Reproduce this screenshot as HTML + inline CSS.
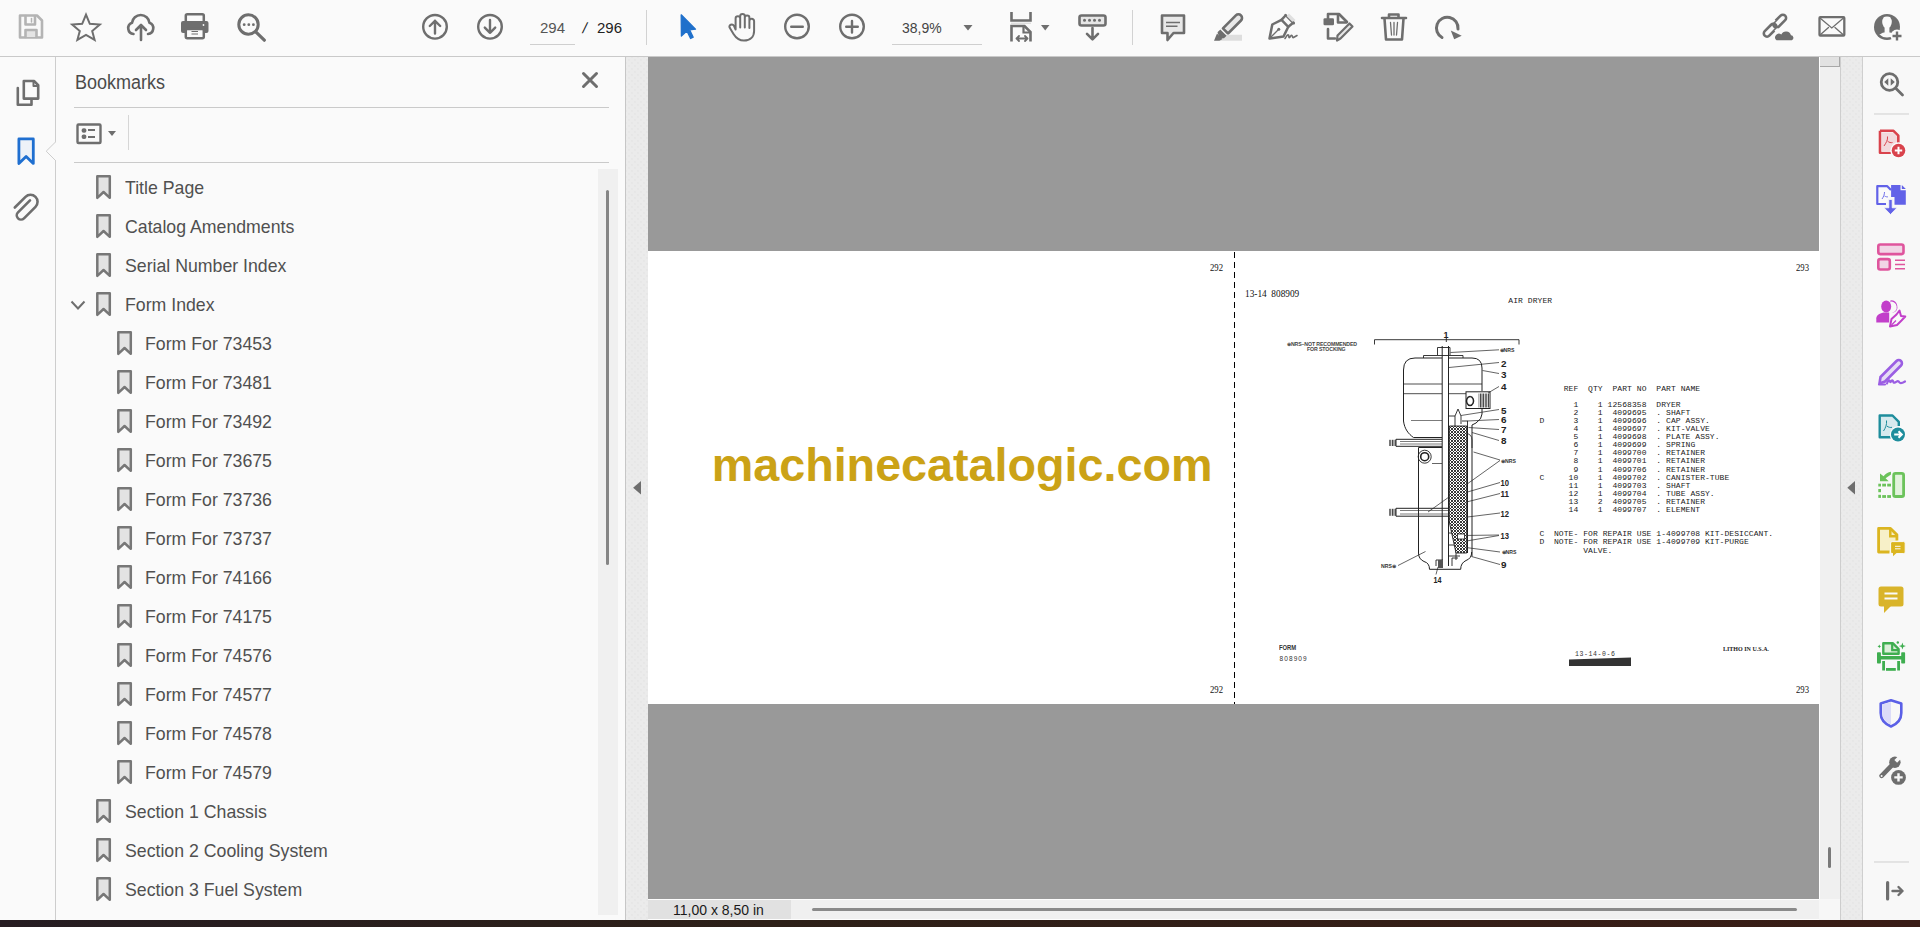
<!DOCTYPE html>
<html><head><meta charset="utf-8">
<style>
*{margin:0;padding:0;box-sizing:border-box}
html,body{width:1920px;height:927px;overflow:hidden;background:#fafafa;font-family:"Liberation Sans",sans-serif}
.a{position:absolute}
#tb{left:0;top:0;width:1920px;height:57px;background:#fafafa;border-bottom:1px solid #c9c9c9}
#licons{left:0;top:57px;width:56px;height:863px;background:#fafafa;border-right:1px solid #cdcdcd}
#panel{left:56px;top:57px;width:570px;height:863px;background:#fafafa;border-right:1px solid #c6c6c6}
.gut{background-color:#ebebeb;background-image:radial-gradient(circle,#dedede 0.5px,transparent 0.8px),radial-gradient(circle,#dedede 0.5px,transparent 0.8px);background-size:6px 6px;background-position:0 0,3px 3px}
#lgut{left:626px;top:57px;width:22px;height:863px}
#doc{left:648px;top:57px;width:1171px;height:842px;background:#999999}
#vs{left:1819px;top:57px;width:22px;height:842px;background:#f0f0f0;border-left:1px solid #fff;border-right:1px solid #cdcdcd}
#rgut{left:1841px;top:57px;width:22px;height:863px;border-right:1px solid #cfcfcf}
#rpane{left:1863px;top:57px;width:57px;height:863px;background:#f8f8f8}
#status{left:648px;top:899px;width:1171px;height:21px;background:#f0f0f0;border-top:1px solid #fdfdfd;border-bottom:1px solid #fdfdfd}
#dark{left:0;top:920px;width:1920px;height:7px;background:linear-gradient(90deg,#261d22,#2d2018 40%,#3a1d16)}
.bm{position:absolute;font-size:19px;color:#505050;white-space:nowrap;line-height:22px;transform:scaleX(0.932);transform-origin:0 0}
.ser{position:absolute;font-family:"Liberation Serif",serif;font-size:10px;line-height:11px;color:#111;white-space:nowrap;transform:scaleX(0.87);transform-origin:0 0}
.mono{position:absolute;font-family:"Liberation Mono",monospace;font-size:8px;line-height:9px;color:#1a1a1a;white-space:nowrap;letter-spacing:0.07px}
</style></head><body>
<div id="tb" class="a"></div>
<div id="licons" class="a"></div>
<div id="panel" class="a"></div>
<div id="lgut" class="a gut"></div>
<div id="doc" class="a"></div>
<div id="vs" class="a"></div>
<div id="rgut" class="a gut"></div>
<div id="rpane" class="a"></div>
<div id="status" class="a"></div>
<div id="dark" class="a"></div>
<!-- left icons -->
<svg class="a" style="left:0;top:57px" width="56" height="200" viewBox="0 57 56 200">
 <g fill="none" stroke="#6e6e6e" stroke-width="2.6" stroke-linejoin="round" stroke-linecap="round">
  <path d="M17.8,88V104.8H31.5V100"/>
  <path d="M23.8,81H34L38.2,85.2V98.6H23.8Z" fill="#fafafa"/>
  <path d="M33.5,81.5V86H38" stroke-width="2"/>
  <path d="M30,198.5L18,210.5A4.2,4.2 0 0 0 24,216.5L35.5,205A7,7 0 0 0 25.5,195L14.8,205.7" stroke-width="2.6" transform="translate(0,1.8)"/>
 </g>
 <path d="M18.9,138.9H33.3V163.4L26.1,156.4L18.9,163.4Z" fill="#eef2f8" stroke="#1f6fd0" stroke-width="2.8" stroke-linejoin="round"/>
 <path d="M56,141.5L46.2,151.2L56,161" fill="#fafafa" stroke="#cdcdcd" stroke-width="1"/>
</svg>
<!-- right pane icons -->
<svg class="a" style="left:1863px;top:57px" width="57" height="863" viewBox="1863 57 57 863">
 <!-- zoom -->
 <g fill="none" stroke="#6e6e6e" stroke-width="2.8" stroke-linecap="round">
  <circle cx="1889.5" cy="82" r="8.3"/>
  <path d="M1896,88.5L1902.5,95"/>
 </g>
 <path d="M1888.3,78.2V85.8L1884.2,82Z M1890.7,78.2V85.8L1894.8,82Z" fill="#6e6e6e"/>
 <path d="M1874,114H1909M1874,862H1909" stroke="#cfcfcf" stroke-width="1"/>
 <!-- create pdf (red) -->
 <path d="M1880,130.8H1893.5L1898.3,135.6V143" fill="none" stroke="#d9434c" stroke-width="2.6" stroke-linejoin="round"/>
 <path d="M1880,130.8V152.8H1891" fill="#f2d9dc" stroke="#d9434c" stroke-width="2.6" stroke-linejoin="round"/>
 <path d="M1881.5,132.5H1893L1897,136.5V143L1891,152H1881.5Z" fill="#f2d9dc"/>
 <path d="M1884,146C1886,143 1888,140 1887.5,136.5M1887.5,141C1889,142.5 1891,143 1892.5,142.5" fill="none" stroke="#d9434c" stroke-width="1"/>
 <circle cx="1898.5" cy="150.5" r="8.2" fill="#fafafa"/>
 <circle cx="1898.5" cy="150.5" r="6.8" fill="#d9434c"/>
 <path d="M1894.8,150.5H1902.2M1898.5,146.8V154.2" stroke="#fff" stroke-width="2"/>
 <!-- export pdf (blue) -->
 <path d="M1886,204H1877.3V186.2H1887.3L1891,190" fill="#fafafa" stroke="#6262e8" stroke-width="2.2" stroke-linejoin="round"/>
 <path d="M1882,199C1883.5,197 1884.5,194.5 1884.5,192M1884.5,196C1886,196.8 1887,197 1888,196.8" fill="none" stroke="#6262e8" stroke-width="0.9"/>
 <path d="M1891.1,185H1900.5V190.2H1905.8V204.8H1894.5V197H1891.1Z" fill="#6262e8"/>
 <path d="M1901.8,185L1905.8,189H1901.8Z" fill="#6262e8"/>
 <path d="M1888.8,199.5H1892.2V207.8H1897L1890.5,214.5L1884,207.8H1888.8Z" fill="#6262e8" stroke="#fafafa" stroke-width="0.8"/>
 <!-- organize (pink) -->
 <g stroke="#df559d" stroke-width="2.6" fill="#f1d6e6" stroke-linejoin="round">
  <rect x="1878.3" y="244.5" width="25.2" height="9.6" rx="2"/>
  <rect x="1878.3" y="259.1" width="11.5" height="10.4" rx="2"/>
 </g>
 <path d="M1895,260.3H1905M1895,264.5H1905M1895,268.7H1905" stroke="#df559d" stroke-width="1.6"/>
 <!-- fill & sign (magenta) -->
 <g fill="#c23fca">
  <ellipse cx="1886.2" cy="306.5" rx="5" ry="5.9"/>
  <path d="M1883.5,312.5H1889.2V322.6H1876.3V318.2C1876.3,315.8 1879,313.5 1883.5,312.5Z"/>
  <path d="M1890.8,300.2A6.5,6.5 0 0 1 1893.8,312.5L1892,313A5.8,5.8 0 0 0 1889.8,301.5Z"/>
 </g>
 <path d="M1890,326.5L1891.5,319L1896.5,314.5L1899.5,310.5L1901,316L1905.3,316.5L1901.5,320.5L1897,325Z" fill="#fafafa" stroke="#c23fca" stroke-width="2" stroke-linejoin="round"/>
 <path d="M1891.5,325L1896,320.5" stroke="#c23fca" stroke-width="1.3"/>
 <!-- sign (purple) -->
 <path d="M1879.5,383.5L1880.5,377L1896.5,361A3,3 0 0 1 1901,365.5L1885,381.5Z" fill="#e6dcf5" stroke="#9b5ee3" stroke-width="2.6" stroke-linejoin="round"/>
 <path d="M1879,384.5H1885M1887,383.5C1888,380.5 1889.5,379.5 1890,381.5C1890.5,383.5 1891.5,380 1892.5,380.5C1893.5,381 1893,383.5 1895,382.5C1897,381.5 1898,380 1899.5,382.5C1900.5,384 1902.5,383 1905,381.5" fill="none" stroke="#9b5ee3" stroke-width="2.2" stroke-linecap="round"/>
 <!-- send (teal) -->
 <path d="M1891,437.3H1879.7V415.5H1892.5L1898.8,421.8V426" fill="#d6eaee" stroke="#1e8d9c" stroke-width="2.4" stroke-linejoin="round"/>
 <path d="M1883.5,431C1885.5,428 1887,424.5 1886.5,420.5M1886.8,426C1888.5,427.3 1890.5,427.8 1892,427.3" fill="none" stroke="#1e8d9c" stroke-width="1"/>
 <circle cx="1898" cy="434.5" r="8.3" fill="#fafafa"/>
 <circle cx="1898" cy="434.5" r="7" fill="#1e8d9c"/>
 <path d="M1894.2,434.5H1901.5M1898.5,431.2L1901.8,434.5L1898.5,437.8" fill="none" stroke="#fff" stroke-width="2"/>
 <!-- split (green) -->
 <rect x="1893.7" y="473.4" width="9.9" height="23.1" rx="1.8" fill="#e3f3dd" stroke="#6cc35b" stroke-width="2.8"/>
 <path d="M1878.3,483.7H1881M1882.2,483.7H1886M1887.2,483.7H1891M1878.3,488H1881M1878.3,492.8H1881M1878.3,497.9H1881M1882.2,497.9H1886M1887.2,497.9H1891" stroke="#6cc35b" stroke-width="0"/>
 <g fill="#6cc35b">
  <rect x="1878.3" y="483.7" width="2.7" height="2.8"/><rect x="1882.2" y="483.7" width="3.8" height="2.8"/><rect x="1887.2" y="483.7" width="3.8" height="2.8"/>
  <rect x="1878.3" y="489" width="2.7" height="3.2"/>
  <rect x="1878.3" y="494.8" width="2.7" height="3.1"/><rect x="1882.2" y="495.1" width="3.8" height="2.8"/><rect x="1887.2" y="495.1" width="3.8" height="2.8"/>
  <path d="M1880,473.4L1880,481.3L1888.7,481.3L1885.6,478.2L1891,474.6V471.8C1888,472.2 1885.5,473.6 1883.6,476.2Z"/>
 </g>
 <!-- yellow doc w comment -->
 <path d="M1889.5,552H1878.6V528.4H1890.5L1896.9,534.8V540.5" fill="#f7f0c8" stroke="#dbb520" stroke-width="2.8" stroke-linejoin="round"/>
 <path d="M1890.3,529V536.2H1897" fill="none" stroke="#dbb520" stroke-width="2.5"/>
 <rect x="1890.6" y="541.6" width="14.6" height="12" rx="1.5" fill="#dbb520" stroke="#fafafa" stroke-width="1"/>
 <path d="M1893,553V556.3L1896.5,553Z" fill="#dbb520"/>
 <path d="M1895,546.3H1900.5M1895,548.8H1900.5" stroke="#fafafa" stroke-width="1"/>
 <!-- comment yellow -->
 <rect x="1878.5" y="586.5" width="25" height="20.1" rx="2.5" fill="#d9b42a"/>
 <path d="M1884,605V613L1892,605Z" fill="#d9b42a"/>
 <path d="M1884.5,593.5H1897.5M1884.5,598.5H1897.5" stroke="#fafafa" stroke-width="1.8"/>
 <!-- print green -->
 <path d="M1883.3,653.8V643.3H1893L1898.6,649V653.8Z" fill="#dbeed9" stroke="#3fae50" stroke-width="2.4" stroke-linejoin="round"/>
 <path d="M1892.2,644V650.2H1898" fill="none" stroke="#3fae50" stroke-width="2.2"/>
 <rect x="1877" y="652.2" width="3.9" height="11.4" rx="0.8" fill="#3fae50"/>
 <rect x="1901.2" y="652.2" width="3.9" height="11.4" rx="0.8" fill="#3fae50"/>
 <rect x="1879" y="656" width="24" height="3.5" fill="#3fae50"/>
 <rect x="1882.2" y="661" width="2.8" height="9.5" fill="#3fae50"/>
 <rect x="1897.2" y="661" width="2.8" height="9.5" fill="#3fae50"/>
 <rect x="1886" y="668" width="9.8" height="2.8" fill="#3fae50"/>
 <path d="M1902.4,642.6L1903.3,645.2L1905.9,646.1L1903.3,647L1902.4,649.6L1901.5,647L1898.9,646.1L1901.5,645.2Z" fill="#3fae50"/>
 <path d="M1879.3,644.6L1879.9,645.8L1881.1,646.4L1879.9,647L1879.3,648.2L1878.7,647L1877.5,646.4L1878.7,645.8Z" fill="#3fae50"/>
 <circle cx="1897.8" cy="642.5" r="1.2" fill="#3fae50"/>
 <!-- shield -->
 <path d="M1891,700.3L1901.3,703.5V713C1901.3,719.5 1897,724 1891,726.5C1885,724 1880.7,719.5 1880.7,713V703.5Z" fill="none" stroke="#5b60e7" stroke-width="2.6" stroke-linejoin="round"/>
 <path d="M1891,702V724.8C1886,722.5 1882.2,718.5 1882.2,713V704.5Z" fill="#dcdcf8"/>
 <!-- wrench -->
 <path d="M1892,765.2L1881.6,775.8" stroke="#6e6e6e" stroke-width="4.6" stroke-linecap="round"/>
 <circle cx="1894.9" cy="762.2" r="5.7" fill="#6e6e6e"/>
 <g transform="translate(1894.9,762.2) rotate(-45)"><rect x="1.2" y="-1.9" width="6" height="3.8" fill="#f8f8f8"/></g>
 <circle cx="1881.6" cy="775.9" r="1" fill="#f8f8f8"/>
 <circle cx="1898.5" cy="777.4" r="8.6" fill="#f8f8f8"/>
 <circle cx="1898.5" cy="777.4" r="7.4" fill="#6e6e6e"/>
 <path d="M1894.3,777.4H1902.7M1898.5,773.2V781.6" stroke="#f8f8f8" stroke-width="2.4"/>
 <!-- collapse arrow -->
 <path d="M1887.6,882.5V899" stroke="#6e6e6e" stroke-width="3.2" stroke-linecap="round"/>
 <path d="M1892.5,891H1902.5M1898.5,887L1902.5,891L1898.5,895" fill="none" stroke="#6e6e6e" stroke-width="2.4" stroke-linecap="round" stroke-linejoin="round"/>
</svg>
<!-- document -->
<div class="a" style="left:1820px;top:57px;width:20px;height:10px;background:#e2e2e2;border-bottom:1px solid #a8a8a8;border-right:1px solid #a8a8a8"></div>
<div class="a" style="left:1828px;top:847px;width:3px;height:21px;background:#7a7a7a;border-radius:2px"></div>
<div class="a" style="left:1819px;top:899px;width:22px;height:21px;background:#f7f7f7;border-right:1px solid #cdcdcd"></div>
<div class="a" style="left:648px;top:900px;width:143px;height:19px;background:#e1e1e1"></div>
<div class="a" style="left:673px;top:902px;font-size:14px;line-height:16px;color:#1a1a1a">11,00 x 8,50 in</div>
<div class="a" style="left:812px;top:908px;width:985px;height:3px;background:#8a8a8a;border-radius:2px"></div>
<!-- splitter arrows -->
<svg class="a" style="left:626px;top:470px" width="22" height="40"><path d="M15,11V24.5L7.1,17.8Z" fill="#6e6e6e"/></svg>
<svg class="a" style="left:1841px;top:470px" width="22" height="40"><path d="M14,11V24.5L6.3,17.8Z" fill="#6e6e6e"/></svg>
<!-- pages -->
<div class="a" style="left:648px;top:251px;width:1171px;height:453px;background:#fff"></div>
<div class="a" style="left:1234px;top:252px;width:1px;height:452px;background:repeating-linear-gradient(180deg,#000 0 6px,transparent 6px 10px)"></div>
<div class="a" style="left:711.7px;top:439px;font-size:46.7px;line-height:52px;font-weight:bold;color:#cba216;white-space:nowrap">machinecatalogic.com</div>
<!-- right page text -->
<div class="ser" style="left:1210px;top:262px">292</div>
<div class="ser" style="left:1210px;top:683.5px">292</div>
<div class="ser" style="left:1796px;top:262px">293</div>
<div class="ser" style="left:1796px;top:683.5px">293</div>
<div class="ser" style="left:1245px;top:288px;transform:scaleX(0.93)">13-14&#160;&#160;808909</div>
<div class="mono" style="left:1539.4px;top:383.8px">&#160;&#160;&#160;&#160;&#160;REF&#160;&#160;QTY&#160;&#160;PART&#160;NO&#160;&#160;PART&#160;NAME</div>
<div class="mono" style="left:1539.4px;top:399.5px">&#160;&#160;&#160;&#160;&#160;&#160;&#160;1&#160;&#160;&#160;&#160;1&#160;12568358&#160;&#160;DRYER</div>
<div class="mono" style="left:1539.4px;top:407.6px">&#160;&#160;&#160;&#160;&#160;&#160;&#160;2&#160;&#160;&#160;&#160;1&#160;&#160;4099695&#160;&#160;.&#160;SHAFT</div>
<div class="mono" style="left:1539.4px;top:415.7px">D&#160;&#160;&#160;&#160;&#160;&#160;3&#160;&#160;&#160;&#160;1&#160;&#160;4099696&#160;&#160;.&#160;CAP&#160;ASSY.</div>
<div class="mono" style="left:1539.4px;top:423.9px">&#160;&#160;&#160;&#160;&#160;&#160;&#160;4&#160;&#160;&#160;&#160;1&#160;&#160;4099697&#160;&#160;.&#160;KIT-VALVE</div>
<div class="mono" style="left:1539.4px;top:432.0px">&#160;&#160;&#160;&#160;&#160;&#160;&#160;5&#160;&#160;&#160;&#160;1&#160;&#160;4099698&#160;&#160;.&#160;PLATE&#160;ASSY.</div>
<div class="mono" style="left:1539.4px;top:440.1px">&#160;&#160;&#160;&#160;&#160;&#160;&#160;6&#160;&#160;&#160;&#160;1&#160;&#160;4099699&#160;&#160;.&#160;SPRING</div>
<div class="mono" style="left:1539.4px;top:448.2px">&#160;&#160;&#160;&#160;&#160;&#160;&#160;7&#160;&#160;&#160;&#160;1&#160;&#160;4099700&#160;&#160;.&#160;RETAINER</div>
<div class="mono" style="left:1539.4px;top:456.3px">&#160;&#160;&#160;&#160;&#160;&#160;&#160;8&#160;&#160;&#160;&#160;1&#160;&#160;4099701&#160;&#160;.&#160;RETAINER</div>
<div class="mono" style="left:1539.4px;top:464.5px">&#160;&#160;&#160;&#160;&#160;&#160;&#160;9&#160;&#160;&#160;&#160;1&#160;&#160;4099706&#160;&#160;.&#160;RETAINER</div>
<div class="mono" style="left:1539.4px;top:472.6px">C&#160;&#160;&#160;&#160;&#160;10&#160;&#160;&#160;&#160;1&#160;&#160;4099702&#160;&#160;.&#160;CANISTER-TUBE</div>
<div class="mono" style="left:1539.4px;top:480.7px">&#160;&#160;&#160;&#160;&#160;&#160;11&#160;&#160;&#160;&#160;1&#160;&#160;4099703&#160;&#160;.&#160;SHAFT</div>
<div class="mono" style="left:1539.4px;top:488.8px">&#160;&#160;&#160;&#160;&#160;&#160;12&#160;&#160;&#160;&#160;1&#160;&#160;4099704&#160;&#160;.&#160;TUBE&#160;ASSY.</div>
<div class="mono" style="left:1539.4px;top:496.9px">&#160;&#160;&#160;&#160;&#160;&#160;13&#160;&#160;&#160;&#160;2&#160;&#160;4099705&#160;&#160;.&#160;RETAINER</div>
<div class="mono" style="left:1539.4px;top:505.1px">&#160;&#160;&#160;&#160;&#160;&#160;14&#160;&#160;&#160;&#160;1&#160;&#160;4099707&#160;&#160;.&#160;ELEMENT</div>
<div class="mono" style="left:1539.4px;top:529.0px">C&#160;&#160;NOTE-&#160;FOR&#160;REPAIR&#160;USE&#160;1-4099708&#160;KIT-DESICCANT.</div>
<div class="mono" style="left:1539.4px;top:537.2px">D&#160;&#160;NOTE-&#160;FOR&#160;REPAIR&#160;USE&#160;1-4099709&#160;KIT-PURGE</div>
<div class="mono" style="left:1539.4px;top:546.0px">&#160;&#160;&#160;&#160;&#160;&#160;&#160;&#160;&#160;VALVE.</div>
<div class="mono" style="left:1508.3px;top:296.2px">AIR&#160;DRYER</div>
<div class="a" style="left:1287px;top:341.5px;font-size:5.2px;line-height:5px;font-weight:bold;color:#444;white-space:nowrap;letter-spacing:-0.1px">&#8859;NRS&#8211;NOT RECOMMENDED<br><span style="padding-left:20px">FOR STOCKING</span></div>
<div class="a" style="left:1278.5px;top:643.5px;font-size:6.5px;line-height:7px;font-weight:bold;color:#333;transform:scaleX(0.9);transform-origin:0 0">FORM</div>
<div class="a" style="left:1279.5px;top:654.5px;font-size:6.5px;line-height:7px;color:#333;letter-spacing:1.1px">808909</div>
<div class="a" style="left:1575px;top:651px;font-size:6.5px;line-height:7px;color:#333;letter-spacing:0.6px;font-family:'Liberation Mono',monospace">13-14-0-6</div>
<div class="a" style="left:1723px;top:644.5px;font-size:7px;line-height:8px;font-weight:bold;color:#222;font-family:'Liberation Serif',serif;transform:scaleX(0.86);transform-origin:0 0;white-space:nowrap">LITHO IN U.S.A.</div>
<svg class="a" style="left:1569px;top:657px" width="63" height="10"><path d="M0,2.5L62,0.5V9H0Z" fill="#333"/></svg>
<!-- diagram -->
<svg class="a" style="left:1370px;top:320px" width="160" height="270" viewBox="1370 320 160 270">
<defs>
 <pattern id="hatch" width="3" height="3" patternUnits="userSpaceOnUse">
  <rect width="3" height="3" fill="#fff"/>
  <path d="M0,3L3,0M0,0L3,3" stroke="#222" stroke-width="0.9"/>
 </pattern>
 <pattern id="thr" width="1.6" height="8" patternUnits="userSpaceOnUse"><rect width="1.6" height="8" fill="#fff"/><rect width="0.9" height="8" fill="#333"/></pattern>
</defs>
<g fill="none" stroke="#222" stroke-width="0.9">
 <!-- bracket -->
 <path d="M1374.5,344.5V339.7H1519V344.5M1446.3,337V342"/>
 <!-- top cap and rod -->
 <path d="M1437.5,355V347.5H1450V355"/>
 <path d="M1442.2,346V566M1448.5,346V566" stroke-width="1"/>
 <path d="M1423.5,358V355.5H1463V358"/>
 <!-- dome -->
 <path d="M1442,437.5H1413.5C1408.5,434 1404.5,429 1403.5,421V370Q1403.5,358 1415,358H1442M1448.5,358H1472Q1482,358 1482,368V391" stroke-width="1"/>
 <path d="M1403.5,384H1442M1448.5,384H1482M1403.5,393.7H1442M1448.5,393.7H1466" stroke-width="0.8"/>
 <path d="M1411,420.5H1442" stroke-width="0.6"/>
 <!-- valve box -->
 <rect x="1466" y="391.8" width="24" height="16.7" stroke-width="1"/>
 <path d="M1482,408.5V414Q1482,419 1476,423L1472,425V556.5" stroke-width="1"/>
 <path d="M1467.5,426V553" stroke-width="1"/>
 <!-- inner parts 5-8 -->
 <path d="M1449,416H1455V426M1455,416L1458,409L1461,416V424M1462,421H1467.5V426" stroke-width="0.9"/>
 <!-- arm upper -->
 <path d="M1396,439.3H1442M1396,446.3H1442M1396,439.3V446.3" stroke-width="1"/>
 <path d="M1400,441.5H1442M1400,444H1442" stroke-width="0.6"/>
 <!-- lower housing -->
 <path d="M1442,447.5H1418.5V553Q1418.5,559 1424,561.5Q1429.5,563 1429.5,569.3H1460.7Q1460.7,563 1466,560.5Q1471.7,558.5 1471.7,552" stroke-width="1"/>
 <path d="M1466,433.5Q1472,434 1472,440V448" stroke-width="0.8"/>
 <circle cx="1424.7" cy="456.7" r="6.5" stroke-width="0.9"/>
 <circle cx="1424.7" cy="456.7" r="4" stroke-width="1.6"/>
 <path d="M1432,463.5H1442" stroke-width="0.7"/>
 <!-- arm lower -->
 <path d="M1396,508.3H1448M1396,516.2H1448M1396,508.3V516.2" stroke-width="1"/>
 <path d="M1400,510.5H1448M1400,514H1448" stroke-width="0.6"/>
 <!-- bottom internals -->
 <path d="M1449,522L1456,528V560M1452,533H1449M1449,545H1455M1449,556H1460M1436,566V560H1443M1452,566V558H1458" stroke-width="0.9"/>
 <!-- leader lines -->
 <path d="M1450.5,352.5L1499,349.8M1449,367.5L1499,362.5M1482.5,370.5L1499,373.5M1488,393L1499,386.5M1461,415.5L1499,409.5M1467,421L1499,419.5M1468.5,427.5L1499,429.5M1472,432.5L1499,440.5M1473.5,452L1500,460M1428,512L1500,460.5M1467.5,492L1500,482.5M1466.5,502L1500,493.5M1467.5,517L1500,513M1462.5,535.5L1499,535M1463.5,541.5L1499,535.5M1466,547.5L1500,552M1471.5,556.5L1500,564.5M1438,567L1436,574.5M1398,565.5L1425.5,551.5" stroke-width="0.7"/>
</g>
<!-- hatched filter -->
<path d="M1449.3,426H1466.8V553H1456L1449.3,522Z" fill="url(#hatch)" stroke="#222" stroke-width="0.9"/>
<rect x="1478.5" y="393.5" width="11" height="14" fill="url(#thr)"/>
<path d="M1470,396.5a3.5,4.5 0 1 0 0.1,0" fill="none" stroke="#222" stroke-width="1.5"/>
<rect x="1389" y="439.8" width="7" height="6.2" fill="url(#thr)"/>
<rect x="1389" y="508.8" width="7" height="7" fill="url(#thr)"/>
<rect x="1457.5" y="534" width="7" height="5" fill="#fff" stroke="#222" stroke-width="0.8"/>
<rect x="1438" y="560" width="5" height="8" fill="#555"/>
<g font-family="Liberation Sans,sans-serif" font-size="9.5" fill="#222" font-weight="bold" transform-origin="0 0">
 <text x="1443.5" y="337.5" textLength="5" lengthAdjust="spacingAndGlyphs">1</text>
</g>
<g font-family="Liberation Sans,sans-serif" font-size="9.5" fill="#222" font-weight="bold">
 <text x="1501" y="366.5" textLength="5.5" lengthAdjust="spacingAndGlyphs">2</text>
 <text x="1501" y="377.8" textLength="5.5" lengthAdjust="spacingAndGlyphs">3</text>
 <text x="1501" y="390.3" textLength="5.5" lengthAdjust="spacingAndGlyphs">4</text>
 <text x="1501" y="413.5" textLength="5.5" lengthAdjust="spacingAndGlyphs">5</text>
 <text x="1501" y="423.3" textLength="5.5" lengthAdjust="spacingAndGlyphs">6</text>
 <text x="1501" y="433.1" textLength="5.5" lengthAdjust="spacingAndGlyphs">7</text>
 <text x="1501" y="444.3" textLength="5.5" lengthAdjust="spacingAndGlyphs">8</text>
 <text x="1500.5" y="486" textLength="8.5" lengthAdjust="spacingAndGlyphs">10</text>
 <text x="1500.5" y="497" textLength="8.5" lengthAdjust="spacingAndGlyphs">11</text>
 <text x="1500.5" y="516.5" textLength="8.5" lengthAdjust="spacingAndGlyphs">12</text>
 <text x="1500.5" y="538.5" textLength="8.5" lengthAdjust="spacingAndGlyphs">13</text>
 <text x="1501" y="568" textLength="5.5" lengthAdjust="spacingAndGlyphs">9</text>
 <text x="1433.5" y="583" textLength="8" lengthAdjust="spacingAndGlyphs">14</text>
</g>
<g font-family="Liberation Sans,sans-serif" font-size="5" fill="#333" font-weight="bold">
 <text x="1499.5" y="352" textLength="15" lengthAdjust="spacingAndGlyphs">&#8859;NRS</text>
 <text x="1501" y="462.5" textLength="15" lengthAdjust="spacingAndGlyphs">&#8859;NRS</text>
 <text x="1501.5" y="554" textLength="15" lengthAdjust="spacingAndGlyphs">&#8859;NRS</text>
 <text x="1381" y="567.5" textLength="15" lengthAdjust="spacingAndGlyphs">NRS&#8859;</text>
</g>
</svg>
<!-- panel -->
<div class="a" style="left:75px;top:71px;font-size:20px;color:#4b4b4b;transform:scaleX(0.9);transform-origin:0 0;line-height:22px">Bookmarks</div>
<div class="a" style="left:74px;top:107px;width:535px;height:1px;background:#cacaca"></div>
<div class="a" style="left:74px;top:162px;width:535px;height:1px;background:#cacaca"></div>
<div class="a" style="left:128px;top:115px;width:1px;height:35px;background:#d6d6d6"></div>
<div class="a" style="left:598px;top:169px;width:20px;height:746px;background:#f0f0f0"></div>
<div class="a" style="left:606px;top:190px;width:3px;height:375px;background:#858585;border-radius:2px"></div>
<svg class="a" style="left:0;top:0" width="640" height="320">
 <g stroke="#6e6e6e" stroke-width="3" stroke-linecap="round"><path d="M583.5,73.5L596.5,86.5M596.5,73.5L583.5,86.5"/></g>
 <rect x="77.5" y="124.5" width="23" height="18.5" rx="1" fill="none" stroke="#6e6e6e" stroke-width="2.4"/>
 <rect x="81.6" y="128.2" width="4.8" height="4.6" rx="2" fill="#6e6e6e"/><rect x="81.6" y="134.4" width="4.8" height="4.6" rx="2" fill="#6e6e6e"/>
 <path d="M88,130H95M88,137H95" stroke="#6e6e6e" stroke-width="2.2"/>
 <path d="M108,131H116L112,136Z" fill="#6e6e6e"/>
 <path d="M71.5,301.5L78,308.5L84.5,301.5" fill="none" stroke="#6e6e6e" stroke-width="2"/>
</svg>
<div class="bmw"><div class="bm" style="left:125px;top:177px">Title Page</div>
<div class="bm" style="left:125px;top:216px">Catalog Amendments</div>
<div class="bm" style="left:125px;top:255px">Serial Number Index</div>
<div class="bm" style="left:125px;top:294px">Form Index</div>
<div class="bm" style="left:145px;top:333px">Form For 73453</div>
<div class="bm" style="left:145px;top:372px">Form For 73481</div>
<div class="bm" style="left:145px;top:411px">Form For 73492</div>
<div class="bm" style="left:145px;top:450px">Form For 73675</div>
<div class="bm" style="left:145px;top:489px">Form For 73736</div>
<div class="bm" style="left:145px;top:528px">Form For 73737</div>
<div class="bm" style="left:145px;top:567px">Form For 74166</div>
<div class="bm" style="left:145px;top:606px">Form For 74175</div>
<div class="bm" style="left:145px;top:645px">Form For 74576</div>
<div class="bm" style="left:145px;top:684px">Form For 74577</div>
<div class="bm" style="left:145px;top:723px">Form For 74578</div>
<div class="bm" style="left:145px;top:762px">Form For 74579</div>
<div class="bm" style="left:125px;top:801px">Section 1 Chassis</div>
<div class="bm" style="left:125px;top:840px">Section 2 Cooling System</div>
<div class="bm" style="left:125px;top:879px">Section 3 Fuel System</div>
<svg class="a" style="left:0;top:0" width="640" height="927"><g fill="#e3e3e3" stroke="#777" stroke-width="2.5" stroke-linejoin="round"><path d="M97.3,176.3H109.8V197.8L103.55,192.0L97.3,197.8Z"/><path d="M97.3,215.3H109.8V236.8L103.55,231.0L97.3,236.8Z"/><path d="M97.3,254.3H109.8V275.8L103.55,270.0L97.3,275.8Z"/><path d="M97.3,293.3H109.8V314.8L103.55,309.0L97.3,314.8Z"/><path d="M118.3,332.3H130.8V353.8L124.55,348.0L118.3,353.8Z"/><path d="M118.3,371.3H130.8V392.8L124.55,387.0L118.3,392.8Z"/><path d="M118.3,410.3H130.8V431.8L124.55,426.0L118.3,431.8Z"/><path d="M118.3,449.3H130.8V470.8L124.55,465.0L118.3,470.8Z"/><path d="M118.3,488.3H130.8V509.8L124.55,504.0L118.3,509.8Z"/><path d="M118.3,527.3H130.8V548.8L124.55,543.0L118.3,548.8Z"/><path d="M118.3,566.3H130.8V587.8L124.55,582.0L118.3,587.8Z"/><path d="M118.3,605.3H130.8V626.8L124.55,621.0L118.3,626.8Z"/><path d="M118.3,644.3H130.8V665.8L124.55,660.0L118.3,665.8Z"/><path d="M118.3,683.3H130.8V704.8L124.55,699.0L118.3,704.8Z"/><path d="M118.3,722.3H130.8V743.8L124.55,738.0L118.3,743.8Z"/><path d="M118.3,761.3H130.8V782.8L124.55,777.0L118.3,782.8Z"/><path d="M97.3,800.3H109.8V821.8L103.55,816.0L97.3,821.8Z"/><path d="M97.3,839.3H109.8V860.8L103.55,855.0L97.3,860.8Z"/><path d="M97.3,878.3H109.8V899.8L103.55,894.0L97.3,899.8Z"/></g></svg></div>
<!-- toolbar -->
<svg class="a" style="left:0;top:0" width="1920" height="56">
<g fill="none" stroke="#6e6e6e" stroke-width="2.4" stroke-linecap="round" stroke-linejoin="round">
 <!-- save disabled -->
 <g stroke="#b4b4b4" stroke-width="2.6">
  <path d="M20,15.5H37L42,20.5V37.5H20Z" stroke-linejoin="round"/>
  <path d="M25.5,16V24.5H35V16"/>
  <path d="M25.5,37V30H36.5V37" fill="#e4e4e4"/>
 </g>
 <path d="M31.5,18.5V22" stroke="#b4b4b4" stroke-width="1.5"/>
 <!-- star -->
 <path d="M86,14.6L89.8,23.8L99.8,24.5L92.2,31L94.6,39.8L86,34.8L77.4,39.8L79.8,31L72.2,24.5L82.2,23.8Z" stroke-width="2" stroke-linejoin="miter" stroke-miterlimit="3"/>
 <!-- cloud upload -->
 <path d="M133.5,34A5.8,5.8 0 0 1 132,22.8A8.8,8.8 0 0 1 149.5,22.8A5.8,5.8 0 0 1 148,34" stroke-width="2.6"/>
 <path d="M141,40V25M136,30L141,25L146,30" stroke-width="2.6"/>
 <!-- search -->
 <circle cx="248.5" cy="24.5" r="9.7" stroke-width="3"/>
 <path d="M255.8,31.8L264.3,40.2" stroke-width="3.2"/>
 <!-- up / down -->
 <circle cx="435" cy="26.8" r="11.8"/>
 <path d="M435,20.8V33.5M429.8,26L435,20.8L440.2,26"/>
 <circle cx="490" cy="26.8" r="11.8"/>
 <path d="M490,20V32.8M484.8,27.6L490,32.8L495.2,27.6"/>
 <!-- hand -->
 <path d="M735.6,29.5V18.6a2.3,2.3 0 0 1 4.6,0V27.5M740.2,27.5V16.2a2.3,2.3 0 0 1 4.6,0V27.5M744.8,27.5V17.8a2.3,2.3 0 0 1 4.6,0V28M749.4,28V21.2a2.35,2.35 0 0 1 4.7,0V31C754.1,37 750,40.6 744,40.6C739,40.6 736,38 733.5,34L729.6,27.6C728.4,25 732.3,23.2 734,25.8L735.6,29.5" stroke-width="2"/>
 <!-- minus / plus -->
 <circle cx="797" cy="26.5" r="11.8"/>
 <path d="M791.2,26.8H802.8"/>
 <circle cx="852" cy="26.5" r="11.8"/>
 <path d="M846.2,26.8H857.8M852,21V32.6"/>
 <!-- fit page -->
 <path d="M1011.5,12V20.5H1030.5V12" stroke-linecap="butt" stroke-linejoin="miter" stroke-width="2.6"/>
 <path d="M1011.5,41.5V26H1024.5L1030.5,32V41.5" stroke-linecap="butt" stroke-linejoin="miter" stroke-width="2.6"/>
 <path d="M1023.5,26.5V32.5H1030" stroke-width="2.2" stroke-linejoin="miter"/>
 <path d="M1016.5,38.5H1027.5M1019,36L1016.5,38.5L1019,41M1025,36L1027.5,38.5L1025,41" stroke-width="1.8"/>
 <!-- read mode -->
 <rect x="1079.5" y="15.5" width="26" height="10" rx="2" fill="#e6e6e6" stroke-width="2.6"/>
 <path d="M1092.5,28V39M1087,33.8L1092.5,39.3L1098,33.8" stroke-width="2.6"/>
 <!-- comment -->
 <path d="M1162,15.5H1184V33H1173.5L1167.5,40V33H1162Z" fill="#e8e8e8" stroke-width="2.6" stroke-linejoin="round"/>
 <path d="M1166,22.5H1180M1166,26.3H1177.5" stroke-width="1.6" stroke-linecap="butt"/>
 <!-- highlighter -->
 <g transform="translate(1232.2,24.2) rotate(-45)"><path d="M-9.5,-3.6H8.8A3.6,3.6 0 0 1 8.8,3.6H-9.5Z" fill="#e8e8e8" stroke-width="2.6" stroke-linejoin="round"/></g>
 <!-- sign pen -->
 <path d="M1285.5,15L1293.8,23.3" stroke-width="2.4"/>
 <path d="M1286.5,16L1293,22.5L1295.5,20L1289,13.5Z" fill="#e0e0e0" stroke="none"/>
 <path d="M1269.5,38.5L1272.3,24.5L1281.5,19.8L1288.3,26.8L1283.5,36.5Z" stroke-width="2.5" stroke-linejoin="round"/>
 <path d="M1281.5,19.8L1285.5,15.5M1288.3,26.8L1293.5,22.5" stroke-width="2.5"/>
 <path d="M1270.5,37.5L1278.5,29.5" stroke-width="1.3"/>
 <path d="M1285,38.5C1286.5,36.5 1287.5,34 1288.5,35C1289.2,36 1288.5,38 1289.5,37.5C1290.5,37 1291,34.5 1292,35.5C1292.8,36.3 1292.2,38 1293.5,37.5L1297,35.5" stroke-width="1.6"/>
 <!-- edit pdf -->
 <path d="M1328,19.5V14H1339L1347,22" stroke-width="2.6" stroke-linejoin="round"/>
 <path d="M1338,14.5V22.5H1346" stroke-width="2.6"/>
 <path d="M1328,29V38.5H1335" stroke-width="2.6"/>
 <path d="M1337,40.5L1337.5,35.5L1349.5,23.5L1352.5,26.5L1340.5,38.5Z" fill="#e8e8e8" stroke-width="2.2"/>
 <!-- trash -->
 <path d="M1382,18H1406M1389,18V14.5H1398.5V18" stroke-width="2.6"/>
 <path d="M1384.5,18.5L1386,39.5H1402L1403.5,18.5" stroke-width="2.6"/>
 <path d="M1390.5,22.5L1391.5,35M1394,22.5V35M1397.5,22.5L1396.5,35" stroke-width="1.3"/>
 <!-- rotate -->
 <path d="M1442,37.5A10.8,10.8 0 1 1 1458,29" stroke-width="3"/>
 <!-- share -->
 <g transform="translate(1779.7,21.1) rotate(-45)"><rect x="-7.7" y="-3.2" width="15.4" height="6.4" rx="3.2" stroke-width="2.6"/><path d="M-6.5,-4.6H-2.5" stroke="#fafafa" stroke-width="2.4" stroke-linecap="butt"/></g>
 <g transform="translate(1770.2,30.2) rotate(-45)"><rect x="-7.7" y="-3.2" width="15.4" height="6.4" rx="3.2" stroke-width="2.6"/><path d="M2.5,4.6H6.5" stroke="#fafafa" stroke-width="2.4" stroke-linecap="butt"/></g>
<!-- mail -->
 <rect x="1819.5" y="17.2" width="24.8" height="18.3" rx="0.8" stroke-width="2.3"/>
 <path d="M1820,18L1831.8,28L1843.5,18M1820,35L1828.5,27.5M1843.5,35L1835,27.5" stroke-width="1.3" stroke-linejoin="miter"/>
</g>
<g fill="#6e6e6e">
 <!-- printer -->
 <rect x="185.8" y="14.2" width="18" height="12" rx="1.5" fill="none" stroke="#6e6e6e" stroke-width="2.5"/>
 <rect x="181" y="21" width="27.5" height="12" rx="2"/>
 <rect x="185.8" y="29" width="18" height="9.3" rx="1.5" fill="#fafafa" stroke="#6e6e6e" stroke-width="2.5"/>
 <path d="M191.5,31.5H198M191.5,34H198" stroke="#6e6e6e" stroke-width="1.2"/>
 <circle cx="203.5" cy="25" r="0.9" fill="#fafafa"/>
 <circle cx="244.2" cy="24.7" r="1.4"/><circle cx="248.8" cy="24.7" r="1.4"/><circle cx="253.4" cy="24.7" r="1.4"/>
 <!-- select arrow -->
 <path d="M681.2,14.8L695.5,29.2L689.6,29.8L693.2,37.2L690.6,38.5L686.9,31L681.4,36Z" fill="#1f70cb" stroke="#1f70cb" stroke-width="1.3" stroke-linejoin="round"/>
 <!-- dropdown tris -->
 <path d="M963.5,25H972.5L968,30.5Z"/>
 <path d="M1041,25H1049.5L1045.2,30.5Z"/>
 <circle cx="1084.5" cy="20.3" r="1.5"/><circle cx="1089.5" cy="20.3" r="1.5"/><circle cx="1094.5" cy="20.3" r="1.5"/><circle cx="1099.5" cy="20.3" r="1.5"/>
 <path d="M1221.5,34.8H1242V40.8H1220Z" fill="#dedede"/>
 <path d="M1220.3,29.5L1226.6,35.8L1224,38.2H1219.5L1217.5,32.3Z"/>
 <path d="M1217,33.5L1222.5,39L1219.5,40.8H1214Z"/>
 <circle cx="1278.8" cy="29.3" r="1.5"/>
 
 <rect x="1323.5" y="18.2" width="10.5" height="7" rx="1.3"/>
 <path d="M1450.8,30.5L1461.7,35.8L1454.2,39.2Z"/>
 <path d="M1776.5,40.3H1791.8A2.6,2.6 0 0 0 1791,35.3A5.2,5.2 0 0 0 1781.3,34.6A3,3 0 0 0 1776.5,40.3Z" stroke="#fafafa" stroke-width="2"/>
 <path d="M1776.5,40.3H1791.8A2.6,2.6 0 0 0 1791,35.3A5.2,5.2 0 0 0 1781.3,34.6A3,3 0 0 0 1776.5,40.3Z"/>
</g>
<defs><clipPath id="uc"><circle cx="1887" cy="27" r="10.6"/></clipPath></defs>
<circle cx="1887" cy="27" r="13" fill="#6e6e6e"/>
<g clip-path="url(#uc)" fill="#fafafa"><ellipse cx="1887" cy="22" rx="4.8" ry="6.4"/><ellipse cx="1887" cy="41.5" rx="11" ry="9.5"/><rect x="1884.6" y="26" width="4.8" height="7"/></g>
<circle cx="1897" cy="36" r="6.5" fill="#fafafa"/>
<path d="M1892.5,36H1901.5M1897,31.5V40.5" stroke="#6e6e6e" stroke-width="2.4"/>
<!-- separators -->
<path d="M646.5,10V45M1132.5,10V45" stroke="#d2d2d2" stroke-width="1"/>
<path d="M1011,23.3H1031" stroke="#dedede" stroke-width="1.4"/>
<path d="M530,44.5H575M892,44.5H982" stroke="#cfcfcf" stroke-width="1.2"/>
</svg>
<div class="a" style="left:540px;top:19px;font-size:15px;color:#555;line-height:17px">294</div>
<div class="a" style="left:583px;top:19px;font-size:15px;color:#222;line-height:17px;transform:skewX(-12deg)">/</div>
<div class="a" style="left:597px;top:19px;font-size:15px;color:#222;line-height:17px">296</div>
<div class="a" style="left:902px;top:18.5px;font-size:15.5px;color:#444;line-height:17px;transform:scaleX(0.9);transform-origin:0 0">38,9%</div>
</body></html>
